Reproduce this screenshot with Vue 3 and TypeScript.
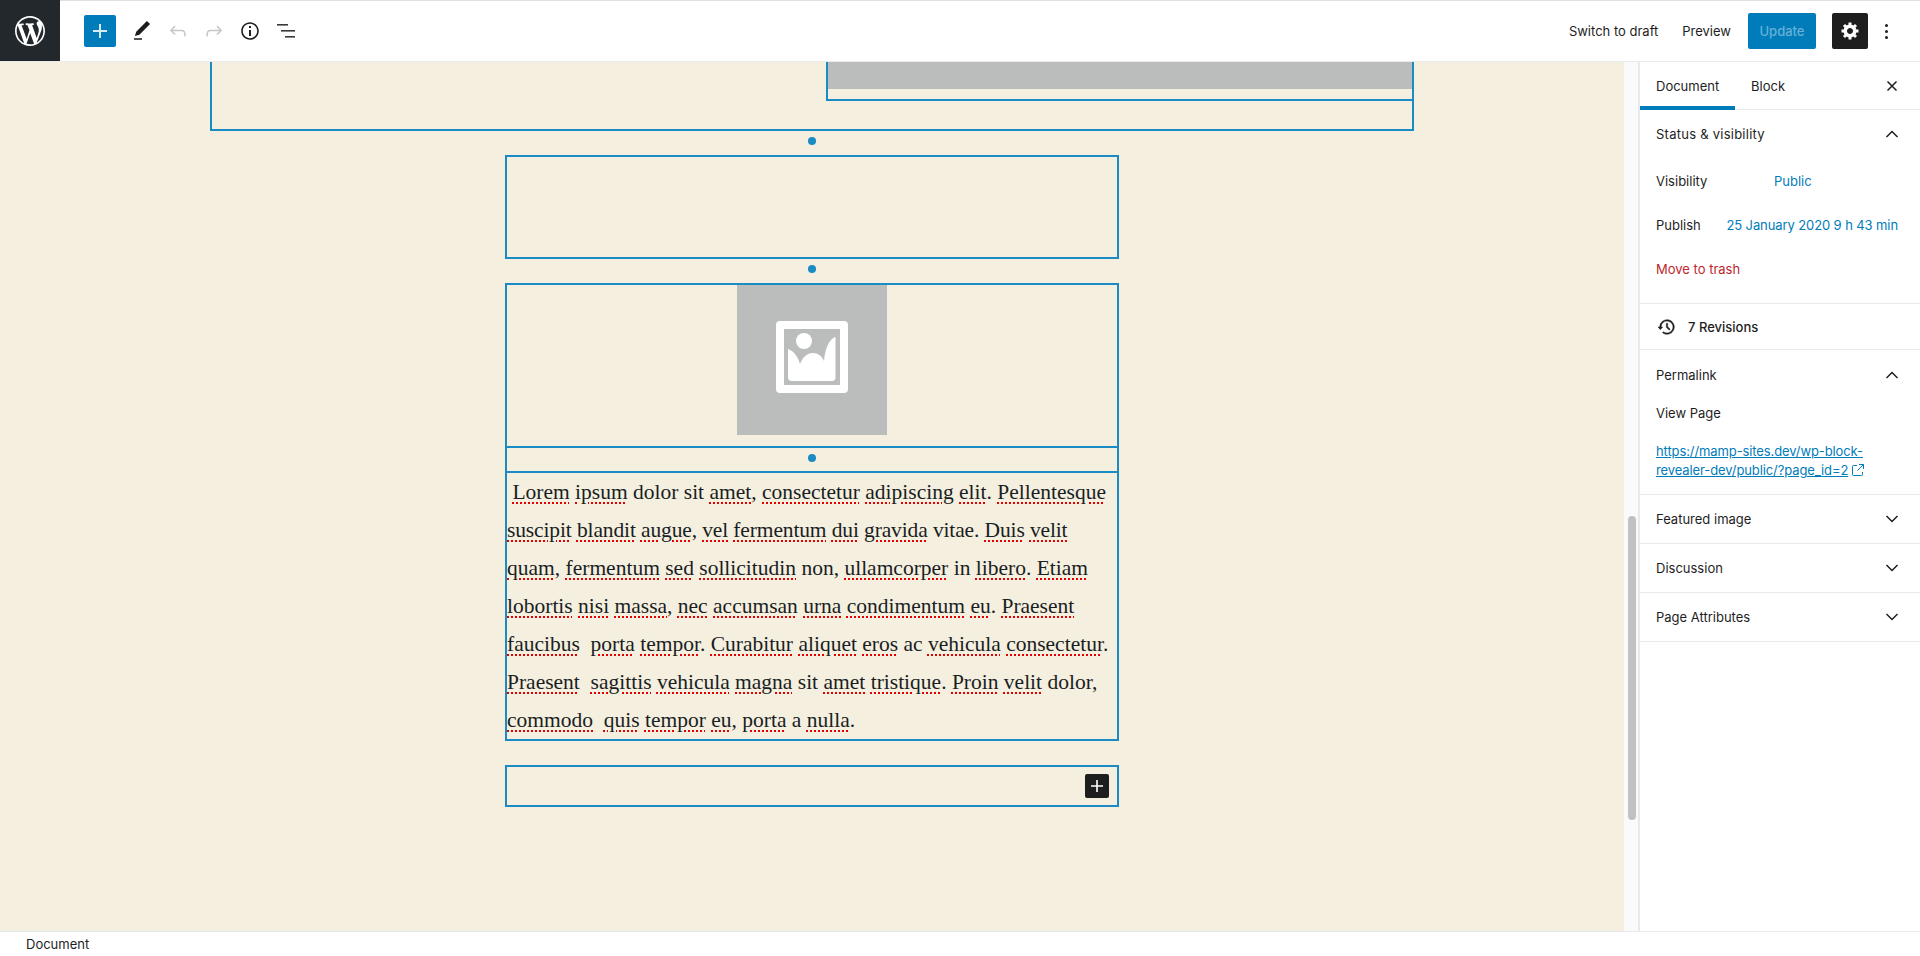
<script setup lang="ts">
interface Token { text: string; bad: boolean }

const source: string[] = [
  ' Lorem ipsum dolor sit amet, consectetur adipiscing elit. Pellentesque',
  'suscipit blandit augue, vel fermentum dui gravida vitae. Duis velit',
  'quam, fermentum sed sollicitudin non, ullamcorper in libero. Etiam',
  'lobortis nisi massa, nec accumsan urna condimentum eu. Praesent',
  'faucibus  porta tempor. Curabitur aliquet eros ac vehicula consectetur.',
  'Praesent  sagittis vehicula magna sit amet tristique. Proin velit dolor,',
  'commodo  quis tempor eu, porta a nulla.',
]
const correct = new Set(['dolor', 'sit', 'vitae', 'non', 'in', 'ac', 'a'])

const lines: Token[][] = source.map((line) =>
  line.split(/(\s+|[,.])/).filter(Boolean).map((text) => ({
    text,
    bad: /\w/.test(text) && !correct.has(text),
  })),
)
</script>

<template>
  <div class="app">
    <header class="topbar">
      <div class="logo">
        <svg viewBox="0 0 20 20" width="30" height="30" fill="#fff"><path d="M20 10c0-5.51-4.49-10-10-10C4.48 0 0 4.49 0 10c0 5.52 4.48 10 10 10 5.51 0 10-4.48 10-10zM7.78 15.37L4.37 6.22c.55-.02 1.17-.08 1.17-.08.5-.06.44-1.13-.06-1.11 0 0-1.45.11-2.37.11-.18 0-.37 0-.58-.01C4.12 2.69 6.87 1.11 10 1.11c2.33 0 4.45.87 6.05 2.34-.68-.11-1.65.39-1.65 1.58 0 .74.45 1.36.9 2.1.35.61.55 1.36.55 2.46 0 1.49-1.4 5-1.4 5l-3.03-8.37c.54-.02.82-.17.82-.17.5-.05.44-1.25-.06-1.22 0 0-1.44.12-2.38.12-.87 0-2.33-.12-2.33-.12-.5-.03-.56 1.2-.06 1.22l.92.08 1.26 3.41zM17.41 10c.24-.64.74-1.87.43-4.25.7 1.29 1.05 2.71 1.05 4.25 0 3.29-1.73 6.24-4.4 7.78.97-2.59 1.94-5.2 2.92-7.78zM6.1 18.09C3.12 16.65 1.11 13.53 1.11 10c0-1.3.23-2.48.72-3.59C3.25 10.3 4.67 14.2 6.1 18.09zm4.03-6.63l2.58 6.98c-.86.29-1.76.45-2.71.45-.79 0-1.57-.11-2.29-.33.81-2.38 1.62-4.74 2.42-7.1z"/></svg>
      </div>
      <div class="tools">
        <button class="inserter" type="button">
          <svg viewBox="0 0 24 24" width="24" height="24" fill="#d6ebf5"><path d="M11 5h2v6h6v2h-6v6h-2v-6H5v-2h6z"/></svg>
        </button>
        <svg class="tool" viewBox="0 0 24 24" width="24" height="24" fill="#1e1e1e"><path d="M20.1 5.1L16.9 2 6.2 12.7l-1.3 4.4 4.5-1.3L20.1 5.1zM4 20.8h8v-1.5H4v1.5z"/></svg>
        <svg class="tool" viewBox="0 0 24 24" width="24" height="24" fill="#c4c6c8"><path d="M18.3 11.7c-.6-.6-1.4-.9-2.3-.9H6.7l2.9-3.3-1.1-1-4.5 5L8.5 16l1-1-2.7-2.7H16c.5 0 .9.2 1.3.5 1 1 1 3.4 1 4.5v.3h1.5v-.2c0-1.5 0-4.3-1.5-5.7z"/></svg>
        <svg class="tool" viewBox="0 0 24 24" width="24" height="24" fill="#c4c6c8"><path d="M15.6 6.5l-1.1 1 2.9 3.3H8c-.9 0-1.7.3-2.3.9-1.4 1.5-1.4 4.2-1.4 5.6v.2h1.5v-.3c0-1.1 0-3.5 1-4.5.3-.3.7-.5 1.3-.5h9.2L14.5 15l1.1 1.1 4.6-4.6-4.6-5z"/></svg>
        <svg class="tool" viewBox="0 0 24 24" width="24" height="24" fill="#1e1e1e"><path d="M12 3.2c-4.8 0-8.8 3.9-8.8 8.8 0 4.8 3.9 8.8 8.8 8.8 4.8 0 8.8-3.9 8.8-8.8 0-4.8-4-8.8-8.8-8.8zm0 16c-4 0-7.2-3.3-7.2-7.2C4.8 8 8 4.8 12 4.8s7.2 3.3 7.2 7.2c0 4-3.2 7.2-7.2 7.2zM11 17h2v-6h-2v6zm0-8h2V7h-2v2z"/></svg>
        <svg class="tool" viewBox="0 0 24 24" width="24" height="24" fill="#3a3a3a"><rect x="3" y="5" width="11" height="1.6"/><rect x="7" y="11" width="14" height="1.6"/><rect x="11" y="17" width="10" height="1.6"/></svg>
      </div>
      <div class="actions">
        <span class="action draft">Switch to draft</span>
        <span class="action preview">Preview</span>
        <button class="update" type="button">Update</button>
        <button class="gear" type="button">
          <svg viewBox="0 0 20 20" width="20" height="20" fill="#fff"><path d="M18 12h-2.18c-.17.7-.44 1.35-.81 1.93l1.54 1.54-2.1 2.1-1.54-1.54c-.58.36-1.23.63-1.91.79V19H8v-2.18c-.68-.16-1.33-.43-1.91-.79l-1.54 1.54-2.12-2.12 1.54-1.54c-.36-.58-.63-1.23-.79-1.91H1V9.03h2.17c.16-.7.44-1.35.8-1.94L2.43 5.55l2.1-2.1 1.54 1.54c.58-.37 1.24-.64 1.93-.81V2h3v2.18c.68.16 1.33.43 1.91.79l1.54-1.54 2.12 2.12-1.54 1.54c.36.59.64 1.24.8 1.94H18V12zm-8.5 1.5c1.66 0 3-1.34 3-3s-1.34-3-3-3-3 1.34-3 3 1.34 3 3 3z" transform="translate(.5 -.5)"/></svg>
        </button>
        <div class="more"><i></i><i></i><i></i></div>
      </div>
    </header>

    <div class="main">
      <main class="canvas">
        <div class="outer">
          <div class="inner"><div class="inner-fill"></div></div>
        </div>
        <div class="gap"><span class="dot"></span></div>
        <div class="box empty"></div>
        <div class="gap"><span class="dot"></span></div>
        <div class="box stack">
          <div class="figure">
            <div class="placeholder">
              <svg viewBox="0 0 72 72" width="72" height="72" fill="#fff">
                <path fill-rule="evenodd" d="M4 0h64a4 4 0 0 1 4 4v64a4 4 0 0 1-4 4H4a4 4 0 0 1-4-4V4a4 4 0 0 1 4-4zM8 8v56h56V8z"/>
                <circle cx="28" cy="20" r="8"/>
                <path d="M12 28C18 30 22 36 24 43C27 36 31 32 37 32C42 32 46 35 48 40C49 28 53 18 59.5 16V56Q59.5 60 56 60H16Q12 60 12 56Z"/>
              </svg>
            </div>
          </div>
          <div class="gap inset"><span class="dot"></span></div>
          <div class="copy">
            <div v-for="(line, i) in lines" :key="i" class="line">
              <span v-for="(token, j) in line" :key="j" :class="{ bad: token.bad }">{{ token.text }}</span>
            </div>
          </div>
        </div>
        <div class="spacer"></div>
        <div class="box last">
          <button class="add" type="button">
            <svg viewBox="0 0 24 24" width="24" height="24" fill="#fff"><path d="M11.2 6h1.6v5.2H18v1.6h-5.2V18h-1.6v-5.2H6v-1.6h5.2z"/></svg>
          </button>
        </div>
      </main>

      <div class="track"><div class="thumb"></div></div>

      <aside class="sidebar">
        <div class="tabs">
          <span class="tab active">Document</span>
          <span class="tab">Block</span>
          <svg class="close" viewBox="0 0 12 12" width="12" height="12" fill="none" stroke="#1e1e1e" stroke-width="1.5"><path d="M1.5 1.5l9 9M10.5 1.5l-9 9"/></svg>
        </div>

        <section class="panel status">
          <div class="title">
            <span class="status-name">Status &amp; visibility</span>
            <svg viewBox="0 0 14 8" width="14" height="8" fill="none" stroke="#1e1e1e" stroke-width="1.5"><path d="M1.5 7L7 1.5 12.5 7"/></svg>
          </div>
          <div class="row"><span class="label">Visibility</span><span class="value">Public</span></div>
          <div class="row"><span>Publish</span><span class="value end">25 January 2020 9 h 43 min</span></div>
          <div class="row trash">Move to trash</div>
        </section>

        <section class="panel revisions">
          <svg viewBox="0 0 24 24" width="22" height="22" fill="#1e1e1e" stroke="#1e1e1e" stroke-width=".5"><path d="M5.5 12h1.75l-2.5 3-2.5-3H4a8 8 0 113.134 6.35l.907-1.194A6.5 6.5 0 105.5 12zm9.53 1.97l-2.28-2.28V8.5a.75.75 0 00-1.5 0V12a.747.747 0 00.218.529l2.5 2.5a.75.75 0 101.062-1.06z"/></svg>
          <span>7 Revisions</span>
        </section>

        <section class="panel permalink">
          <div class="title">
            <span>Permalink</span>
            <svg viewBox="0 0 14 8" width="14" height="8" fill="none" stroke="#1e1e1e" stroke-width="1.5"><path d="M1.5 7L7 1.5 12.5 7"/></svg>
          </div>
          <div class="view">View Page</div>
          <div class="link">
            <a>https://mamp-sites.dev/wp-block-<br />revealer-dev/public/?page_id=2</a>
            <svg viewBox="0 0 12 12" width="12" height="12" fill="none" stroke="#007cba" stroke-width="1"><path d="M5 1.5H1.5a1 1 0 0 0-1 1v8a1 1 0 0 0 1 1h8a1 1 0 0 0 1-1V8M7 .5h4.5V5M11.5.5L5.5 6.5"/></svg>
          </div>
        </section>

        <section v-for="name in ['Featured image', 'Discussion', 'Page Attributes']" :key="name" class="panel">
          <div class="title">
            <span>{{ name }}</span>
            <svg viewBox="0 0 14 8" width="14" height="8" fill="none" stroke="#1e1e1e" stroke-width="1.5"><path d="M1.5 1L7 6.5 12.5 1"/></svg>
          </div>
        </section>
      </aside>
    </div>

    <footer class="footer">Document</footer>
  </div>
</template>

<style scoped>
.app {
  display: flex;
  flex-direction: column;
  height: 956px;
  overflow: hidden;
  background: #fff;
  color: #1e1e1e;
  font-family: Inter, "Noto Sans", sans-serif;
  font-size: 13px;
}
button { border: 0; padding: 0; font: inherit; }

.topbar {
  display: flex;
  align-items: center;
  flex: 0 0 62px;
  box-sizing: border-box;
  border-top: 1px solid #e0e0e0;
  border-bottom: 1px solid #e8e9ea;
}
.logo {
  display: flex;
  align-items: center;
  justify-content: center;
  width: 60px;
  height: 61px;
  margin-top: -1px;
  background: #23282d;
}
.tools { display: flex; align-items: center; margin-left: 24px; }
.inserter {
  display: flex;
  align-items: center;
  justify-content: center;
  width: 32px;
  height: 32px;
  margin-right: 14px;
  border-radius: 2px;
  background: #007cba;
}
.tool { margin-right: 12px; }
.actions { display: flex; align-items: center; margin-left: auto; padding-right: 32px; }
.action { white-space: nowrap; }
.draft { margin-right: 24px; }
.preview { margin-right: 17px; }
.update {
  width: 68px;
  height: 36px;
  border-radius: 2px;
  background: #007cba;
  color: #66b0d6;
  font-weight: 500;
}
.gear {
  display: flex;
  align-items: center;
  justify-content: center;
  width: 36px;
  height: 36px;
  margin-left: 16px;
  border-radius: 2px;
  background: #1e1e1e;
}
.more { display: flex; flex-direction: column; gap: 3px; margin-left: 17px; }
.more i { width: 3px; height: 3px; border-radius: 50%; background: #1e1e1e; }

.main { display: flex; flex: 1; min-height: 0; }
.canvas {
  display: flex;
  flex: 1;
  flex-direction: column;
  align-items: center;
  min-width: 0;
  background: #f5efdf;
}
.outer {
  display: flex;
  flex: 0 0 69px;
  box-sizing: border-box;
  width: 1204px;
  border: 2px solid #1a8bc4;
  border-top: 0;
}
.inner {
  box-sizing: border-box;
  width: 586px;
  height: 39px;
  margin-left: auto;
  border-left: 2px solid #1a8bc4;
  border-bottom: 2px solid #1a8bc4;
}
.inner-fill { height: 27px; background: #bbbdbc; }
.gap {
  display: flex;
  align-items: center;
  justify-content: center;
  flex: 0 0 24px;
  box-sizing: border-box;
  padding-bottom: 4px;
}
.dot { width: 8px; height: 8px; border-radius: 50%; background: #1a8bc4; }
.box {
  box-sizing: border-box;
  width: 614px;
  border: 2px solid #1a8bc4;
}
.empty { height: 104px; }
.figure {
  display: flex;
  justify-content: center;
  height: 161px;
  border-bottom: 2px solid #1a8bc4;
}
.placeholder {
  display: flex;
  align-items: center;
  justify-content: center;
  box-sizing: border-box;
  width: 150px;
  height: 150px;
  padding-bottom: 7px;
  background: #bbbdbc;
}
.inset { border-bottom: 2px solid #1a8bc4; height: 25px; flex-basis: 25px; padding-bottom: 3px; }
.copy {
  font-family: "Liberation Serif", serif;
  font-size: 21.5px;
  line-height: 38px;
  color: #191e23;
}
.line { white-space: pre; }
.line:nth-child(2) { letter-spacing: -.13px; }
.bad {
  text-decoration: underline dotted #e40000 2px;
  text-underline-offset: 3px;
}
.spacer { flex: 0 0 24px; }
.last {
  display: flex;
  align-items: center;
  justify-content: flex-end;
  height: 42px;
  padding-right: 8px;
}
.add {
  display: flex;
  width: 24px;
  height: 24px;
  border-radius: 2px;
  background: #1e1e1e;
}

.track {
  position: relative;
  flex: 0 0 14px;
  background: #fafafa;
}
.thumb {
  position: absolute;
  top: 454px;
  left: 4px;
  width: 8px;
  height: 304px;
  border-radius: 4px;
  background: #c1c1c1;
}

.sidebar {
  flex: 0 0 280px;
  border-left: 2px solid #e8e9ea;
}
.tabs {
  display: flex;
  align-items: center;
  box-sizing: border-box;
  height: 48px;
  border-bottom: 1px solid #e8e9ea;
}
.tab {
  display: flex;
  align-items: center;
  box-sizing: border-box;
  height: 48px;
  padding: 3px 16px 0;
  border-bottom: 4px solid transparent;
  margin-bottom: -1px;
}
.tab.active { width: 95px; border-bottom-color: #007cba; }
.close { margin-left: auto; margin-right: 22px; }
.panel { border-bottom: 1px solid #e8e9ea; }
.title {
  display: flex;
  align-items: center;
  justify-content: space-between;
  height: 48px;
  padding: 0 21px 0 16px;
}
.status-name { letter-spacing: .25px; }
.row {
  display: flex;
  align-items: center;
  height: 44px;
  padding: 0 22px 0 16px;
}
.label { width: 118px; }
.value { color: #007cba; }
.end { margin-left: auto; letter-spacing: -.1px; }
.status .title + .row { margin-top: 1px; }
.trash { color: #c0262c; margin-bottom: 12px; }
.revisions {
  display: flex;
  align-items: center;
  gap: 10px;
  box-sizing: border-box;
  height: 46px;
  padding-left: 16px;
  font-weight: 500;
}
.permalink .title { margin-top: 1px; }
.view { padding: 0 16px; height: 20px; line-height: 20px; margin-top: 4px; }
.link {
  padding: 19px 16px 14px;
  line-height: 19px;
  letter-spacing: -.1px;
  color: #007cba;
}
.link a { text-decoration: underline; }
.link svg { display: inline-block; margin-left: 4px; vertical-align: -1px; }

.footer {
  flex: 0 0 25px;
  box-sizing: border-box;
  padding: 2px 0 0 26px;
  border-top: 1px solid #e8e9ea;
  line-height: 20px;
}
</style>

<style>
html, body { margin: 0; overflow: hidden; }
</style>
